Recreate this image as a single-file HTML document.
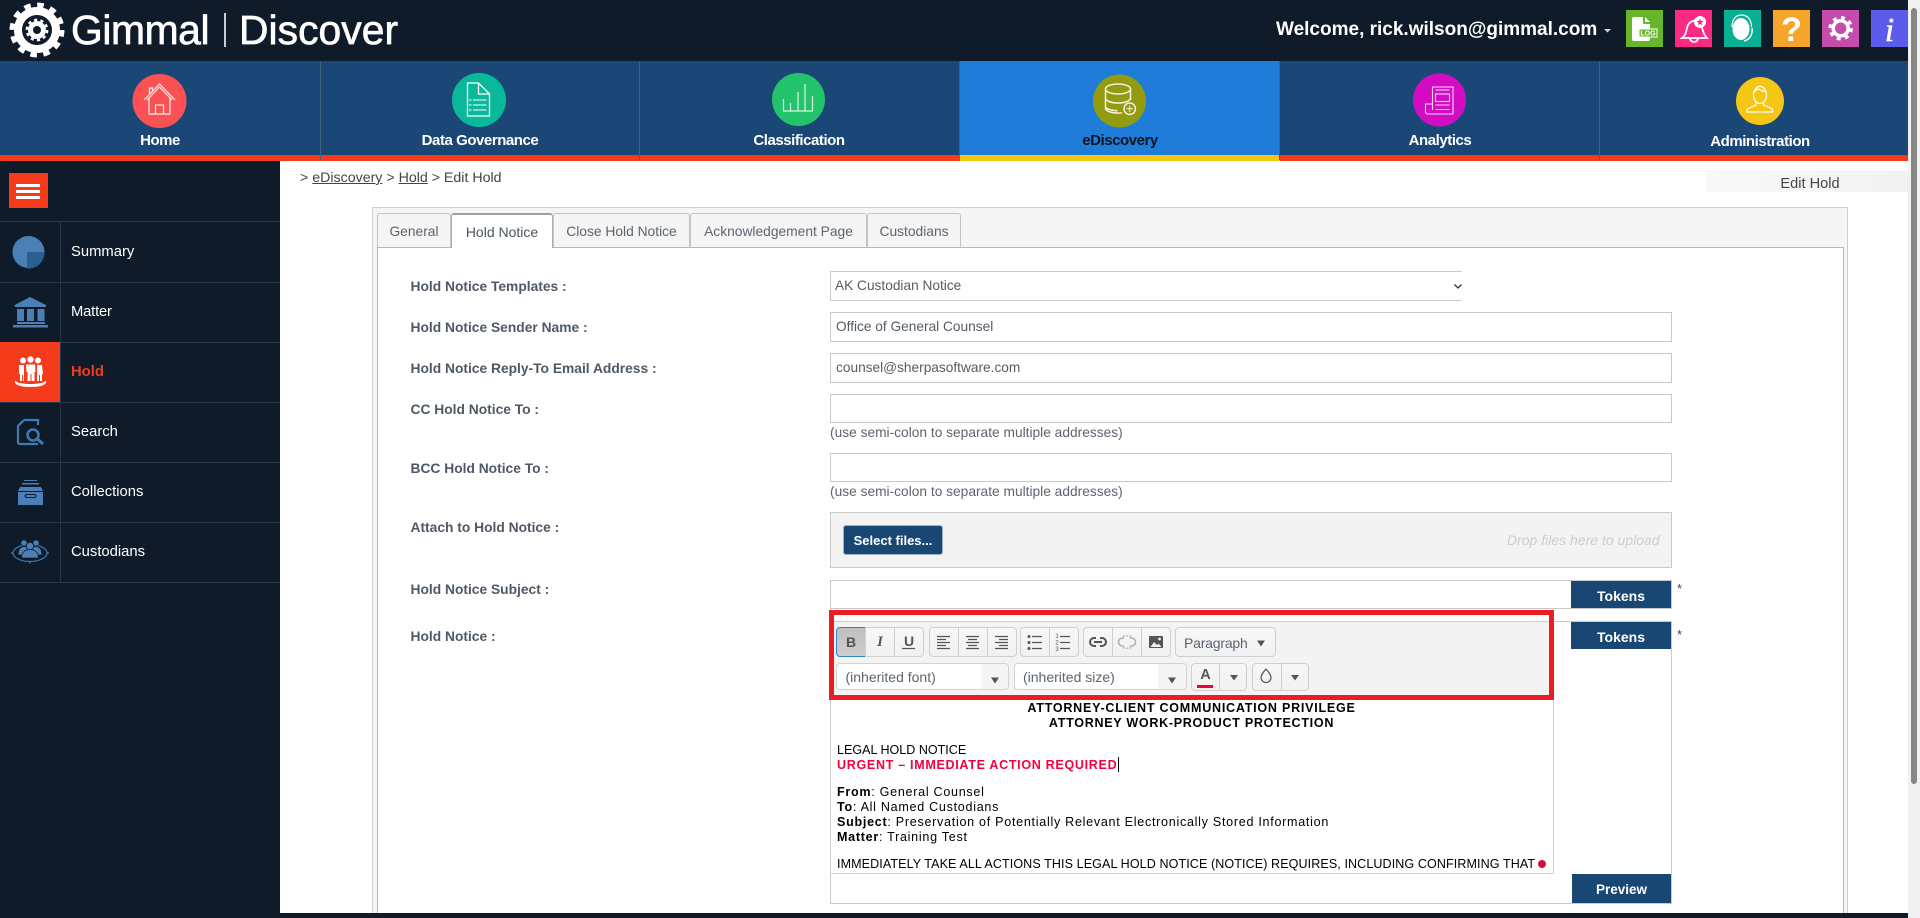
<!DOCTYPE html>
<html lang="en"><head><meta charset="utf-8"><title>Gimmal Discover - Edit Hold</title>
<style>
html,body{margin:0;padding:0;width:1920px;height:918px;overflow:hidden;background:#fff;font-family:"Liberation Sans",Arial,sans-serif}
.b{position:absolute;box-sizing:border-box}
.t{position:absolute;white-space:nowrap;line-height:20px;height:20px}
.nl{color:#fff;font-weight:700;font-size:15px;letter-spacing:-.45px;text-align:center;width:320px}
.sl{color:#fff;font-size:14.8px;left:71px}
.lb{left:410.5px;font-weight:700;font-size:13.8px;color:#4f5966}
.in{left:830px;width:842px;border:1px solid #c9c9c9;background:#fff}
.tv{font-size:13.7px;color:#555c66;left:836px}
.hint{left:830px;font-size:13.75px;color:#5b6470}
.tab{top:213px;height:34px;background:#f5f5f5;border:1px solid #c4c4c4;border-bottom:0;border-radius:3px 3px 0 0;color:#5b6470;font-size:13.8px;line-height:35px;text-align:center}
.btn{background:linear-gradient(#f7f7f7,#f1f1f1);border:1px solid #cfcfcf}
.blue{background:#194774;color:#fff;font-weight:700;font-size:14px;text-align:center}
.ed{left:837px;font-size:12.55px;color:#000;line-height:15px;height:15px}
.ed b{font-weight:700}
.m{letter-spacing:.72px}
</style></head><body>
<!-- top + nav -->
<div class="b" style="left:0;top:0;width:1920px;height:61px;background:#0f1b28"></div>
<div class="b" style="left:0;top:61px;width:1908px;height:94px;background:#1a4775"></div>
<div class="b" style="left:960px;top:61px;width:320px;height:94px;background:#1f7cd8"></div>
<div class="b" style="left:0;top:155px;width:1908px;height:6px;background:#f43b1c"></div>
<div class="b" style="left:960px;top:155px;width:320px;height:6px;background:#f6c613"></div>
<div class="b" style="left:320px;top:61px;width:1px;height:99px;background:#41607f"></div>
<div class="b" style="left:639px;top:61px;width:1px;height:99px;background:#41607f"></div>
<div class="b" style="left:959px;top:61px;width:1px;height:94px;background:#41607f"></div>
<div class="b" style="left:1279px;top:61px;width:1px;height:99px;background:#41607f"></div>
<div class="b" style="left:1599px;top:61px;width:1px;height:99px;background:#41607f"></div>
<!-- sidebar -->
<div class="b" style="left:0;top:161px;width:280px;height:757px;background:#0f1b28"></div>
<div class="b" style="left:0;top:221px;width:280px;height:1px;background:#24384d"></div>
<div class="b" style="left:0;top:282px;width:280px;height:1px;background:#24384d"></div>
<div class="b" style="left:0;top:342px;width:280px;height:1px;background:#24384d"></div>
<div class="b" style="left:0;top:402px;width:280px;height:1px;background:#24384d"></div>
<div class="b" style="left:0;top:462px;width:280px;height:1px;background:#24384d"></div>
<div class="b" style="left:0;top:522px;width:280px;height:1px;background:#24384d"></div>
<div class="b" style="left:0;top:582px;width:280px;height:1px;background:#24384d"></div>
<div class="b" style="left:60px;top:222px;width:1px;height:360px;background:#24384d"></div>
<div class="b" style="left:0;top:342px;width:60px;height:60px;background:#f43b1c"></div>
<div class="b" style="left:9px;top:173px;width:39px;height:35px;background:#f43b1c"></div>
<div class="b" style="left:16px;top:184px;width:24px;height:3px;background:#fff"></div>
<div class="b" style="left:16px;top:190px;width:24px;height:3px;background:#fff"></div>
<div class="b" style="left:16px;top:196px;width:24px;height:3px;background:#fff"></div>
<div class="t sl" style="top:242px">Summary</div>
<div class="t sl" style="top:302px;letter-spacing:-.2px">Matter</div>
<div class="t sl" style="top:362px;color:#f43b1c;font-weight:700">Hold</div>
<div class="t sl" style="top:422px">Search</div>
<div class="t sl" style="top:482px">Collections</div>
<div class="t sl" style="top:542px">Custodians</div>
<!-- scrollbar -->
<div class="b" style="left:1908px;top:0;width:12px;height:918px;background:#f1f1f1"></div>
<div class="b" style="left:1911px;top:8px;width:6px;height:776px;background:#878787;border-radius:3px"></div>
<!-- brand text -->
<div class="t" style="left:71px;top:6px;height:48px;line-height:48px;font-size:40.8px;color:#fff;letter-spacing:-.4px;-webkit-text-stroke:.7px #fff">Gimmal</div>
<div class="b" style="left:224px;top:13px;width:2px;height:34px;background:#c9ced3"></div>
<div class="t" style="left:239px;top:6px;height:48px;line-height:48px;font-size:40.8px;color:#fff;letter-spacing:.05px;-webkit-text-stroke:.7px #fff">Discover</div>
<div class="t" style="left:1276px;top:20px;font-size:19px;font-weight:700;color:#fff;letter-spacing:0">Welcome, rick.wilson@gimmal.com</div>
<div class="t nl" style="left:0;top:131px">Home</div>
<div class="t nl" style="left:320px;top:131px">Data Governance</div>
<div class="t nl" style="left:639px;top:131px">Classification</div>
<div class="t nl" style="left:960px;top:131px;color:#0b1622">eDiscovery</div>
<div class="t nl" style="left:1280px;top:131px">Analytics</div>
<div class="t nl" style="left:1600px;top:132px">Administration</div>
<!-- breadcrumb -->
<div class="t" style="left:300px;top:168px;font-size:14.2px;color:#444">&gt; <u>eDiscovery</u> &gt; <u>Hold</u> &gt; Edit Hold</div>
<div class="b" style="left:1706px;top:171px;width:202px;height:21px;background:linear-gradient(90deg,#f9f9f9,#f2f2f2)"></div>
<div class="t" style="left:1706px;width:208px;top:174px;font-size:14.6px;color:#444;text-align:center">Edit Hold</div>
<!-- panel -->
<div class="b" style="left:372px;top:207px;width:1476px;height:706px;background:#f5f5f5;border:1px solid #cfcfcf;border-bottom:0"></div>
<div class="b" style="left:377px;top:247px;width:1467px;height:666px;background:#fff;border:1px solid #b9b9b9;border-bottom:0"></div>
<div class="b tab" style="left:377px;width:74px">General</div>
<div class="b tab" style="left:451px;width:102px;height:35px;background:#fff;border-color:#b0b0b0;border-top:2px solid #9f9f9f;line-height:34px;color:#4c5560;font-size:14px">Hold Notice</div>
<div class="b tab" style="left:553px;width:137px">Close Hold Notice</div>
<div class="b tab" style="left:690px;width:177px">Acknowledgement Page</div>
<div class="b tab" style="left:867px;width:94px">Custodians</div>
<!-- footer strip -->
<div class="b" style="left:0;top:913px;width:1908px;height:5px;background:#0f1b28"></div>
<!-- labels -->
<div class="t lb" style="top:277px">Hold Notice Templates :</div>
<div class="t lb" style="top:318px">Hold Notice Sender Name :</div>
<div class="t lb" style="top:359px">Hold Notice Reply-To Email Address :</div>
<div class="t lb" style="top:400px">CC Hold Notice To :</div>
<div class="t lb" style="top:459px">BCC Hold Notice To :</div>
<div class="t lb" style="top:518px">Attach to Hold Notice :</div>
<div class="t lb" style="top:580px">Hold Notice Subject :</div>
<div class="t lb" style="top:627px">Hold Notice :</div>
<!-- inputs -->
<div class="b" style="left:830px;top:271px;width:632px;height:30px;border:1px solid #c9c9c9;border-right:0;background:#fff"></div>
<div class="t tv" style="left:835px;top:276px">AK Custodian Notice</div>
<div class="b in" style="top:312px;height:30px"></div>
<div class="t tv" style="top:317px">Office of General Counsel</div>
<div class="b in" style="top:353px;height:30px"></div>
<div class="t tv" style="top:358px">counsel@sherpasoftware.com</div>
<div class="b in" style="top:394px;height:29px"></div>
<div class="t hint" style="top:423px">(use semi-colon to separate multiple addresses)</div>
<div class="b in" style="top:453px;height:29px"></div>
<div class="t hint" style="top:482px">(use semi-colon to separate multiple addresses)</div>
<div class="b" style="left:830px;top:512px;width:842px;height:56px;background:#f3f3f3;border:1px solid #cbcbcb"></div>
<div class="b blue" style="left:843px;top:525px;width:100px;height:30px;border:1px solid #9fb0c2;border-radius:3px;line-height:30px;font-size:13px">Select files...</div>
<div class="t" style="left:1507px;width:152px;top:530px;text-align:right;font-style:italic;font-size:14px;color:#cdcdcd">Drop files here to upload</div>
<div class="b in" style="top:580px;height:29px"></div>
<div class="b blue" style="left:1571px;top:581px;width:100px;height:27px;line-height:30px">Tokens</div>
<div class="t" style="left:1677px;top:579px;font-size:13px;color:#445">*</div>
<!-- editor -->
<div class="b" style="left:830px;top:621px;width:842px;height:283px;border:1px solid #c9c9c9;background:#fff"></div>
<div class="b" style="left:830px;top:621px;width:724px;height:253px;border:1px solid #d0d0d0;background:#fff"></div>
<div class="b" style="left:831px;top:622px;width:722px;height:75px;background:#f3f3f3"></div>
<div class="b blue" style="left:1571px;top:622px;width:100px;height:27px;line-height:30px">Tokens</div>
<div class="t" style="left:1677px;top:625px;font-size:13px;color:#445">*</div>
<div class="b blue" style="left:1572px;top:874px;width:99px;height:29px;line-height:32px;font-size:13.5px">Preview</div>
<!-- toolbar -->
<div class="b" style="left:836px;top:627px;width:30px;height:30px;background:linear-gradient(#bfbfbf,#cdcdcd);border:1px solid #2e86c8;border-radius:4px 0 0 4px"></div>
<div class="b btn" style="left:865px;top:627px;width:30px;height:30px"></div>
<div class="b btn" style="left:894px;top:627px;width:30px;height:30px;border-radius:0 4px 4px 0"></div>
<div class="b btn" style="left:929px;top:627px;width:30px;height:30px;border-radius:4px 0 0 4px"></div>
<div class="b btn" style="left:958px;top:627px;width:30px;height:30px"></div>
<div class="b btn" style="left:987px;top:627px;width:30px;height:30px;border-radius:0 4px 4px 0"></div>
<div class="b btn" style="left:1020px;top:627px;width:30px;height:30px;border-radius:4px 0 0 4px"></div>
<div class="b btn" style="left:1049px;top:627px;width:30px;height:30px;border-radius:0 4px 4px 0"></div>
<div class="b btn" style="left:1083px;top:627px;width:30px;height:30px;border-radius:4px 0 0 4px"></div>
<div class="b btn" style="left:1112px;top:627px;width:30px;height:30px"></div>
<div class="b btn" style="left:1141px;top:627px;width:30px;height:30px;border-radius:0 4px 4px 0"></div>
<div class="b btn" style="left:1175px;top:627px;width:101px;height:30px;border-radius:4px"></div>
<div class="b" style="left:836px;top:663px;width:173px;height:27px;background:#fff;border:1px solid #d2d2d2;border-radius:4px"></div>
<div class="b" style="left:981px;top:664px;width:27px;height:25px;background:#f5f5f5;border-radius:0 3px 3px 0"></div>
<div class="b" style="left:1014px;top:663px;width:173px;height:27px;background:#fff;border:1px solid #d2d2d2;border-radius:4px"></div>
<div class="b" style="left:1158px;top:664px;width:28px;height:25px;background:#f5f5f5;border-radius:0 3px 3px 0"></div>
<div class="b btn" style="left:1191px;top:663px;width:29px;height:28px;border-radius:4px 0 0 4px"></div>
<div class="b btn" style="left:1219px;top:663px;width:28px;height:28px;border-radius:0 4px 4px 0"></div>
<div class="b btn" style="left:1252px;top:663px;width:30px;height:28px;border-radius:4px 0 0 4px"></div>
<div class="b btn" style="left:1281px;top:663px;width:28px;height:28px;border-radius:0 4px 4px 0"></div>
<div class="t" style="left:836px;width:30px;top:632px;text-align:center;font-weight:700;font-size:14px;color:#555">B</div>
<div class="t" style="left:865px;width:30px;top:632px;text-align:center;font-style:italic;font-family:'Liberation Serif',serif;font-weight:700;font-size:15px;color:#555">I</div>
<div class="t" style="left:894px;width:30px;top:631px;text-align:center;font-weight:700;font-size:14px;color:#555">U</div>
<div class="t" style="left:1184px;top:633px;font-size:14px;letter-spacing:-.2px;color:#5b6470">Paragraph</div>
<div class="t" style="left:845.5px;top:667px;font-size:14px;color:#5b6470">(inherited font)</div>
<div class="t" style="left:1023px;top:667px;font-size:14px;color:#5b6470">(inherited size)</div>
<div class="t" style="left:1191px;width:29px;top:665px;text-align:center;font-weight:700;font-size:14.5px;color:#555">A</div>
<!-- red box -->
<div class="b" style="left:829px;top:610px;width:725px;height:90px;border:5px solid #ed1c24"></div>
<!-- editor text -->
<div class="t ed" style="left:831px;width:721px;top:701px;text-align:center;letter-spacing:.75px"><b>ATTORNEY-CLIENT COMMUNICATION PRIVILEGE</b></div>
<div class="t ed" style="left:831px;width:721px;top:716px;text-align:center;letter-spacing:.7px"><b>ATTORNEY WORK-PRODUCT PROTECTION</b></div>
<div class="t ed" style="top:743px">LEGAL HOLD NOTICE</div>
<div class="t ed" style="top:758px;color:#f5003d;font-weight:700;letter-spacing:.68px">URGENT &#8211; IMMEDIATE ACTION REQUIRED</div>
<div class="b" style="left:1118px;top:757px;width:1px;height:15px;background:#000"></div>
<div class="t ed m" style="top:785px"><b>From</b>: General Counsel</div>
<div class="t ed m" style="top:800px"><b>To</b>: All Named Custodians</div>
<div class="t ed m" style="top:815px"><b>Subject</b>: Preservation of Potentially Relevant Electronically Stored Information</div>
<div class="t ed m" style="top:830px"><b>Matter</b>: Training Test</div>
<div class="t ed" style="top:857px;letter-spacing:.09px">IMMEDIATELY TAKE ALL ACTIONS THIS LEGAL HOLD NOTICE (NOTICE) REQUIRES, INCLUDING CONFIRMING THAT</div>
<!-- icon layer -->
<svg class="b" style="left:0;top:0" width="1920" height="918" viewBox="0 0 1920 918" xmlns="http://www.w3.org/2000/svg">
<!-- logo gear -->
<g transform="translate(37,30)" fill="none" stroke="#fff">
<circle r="25" stroke-width="5" stroke-dasharray="6.6 6.49"/>
<circle r="19" stroke-width="8"/>
<circle r="6.5" stroke-width="5"/>
<circle r="10.2" stroke-width="2.4" stroke-dasharray="3.2 3.2"/>
</g>
<!-- welcome caret -->
<path d="M1604 29h7l-3.5 3.5z" fill="#cfd3d8"/>
<!-- top-right squares -->
<rect x="1626" y="10" width="37" height="37" fill="#67b52d"/>
<rect x="1675" y="10" width="37" height="37" fill="#fc2a82"/>
<rect x="1724" y="10" width="37" height="37" fill="#0ab093"/>
<rect x="1773" y="10" width="37" height="37" fill="#f5a62a"/>
<rect x="1822" y="10" width="37" height="37" fill="#c44caa"/>
<rect x="1871" y="10" width="37" height="37" fill="#5c5cec"/>
<!-- log -->
<path d="M1632 19q0-2 2-2h9v6q0 1 1 1h6v15q0 2-2 2h-14q-2 0-2-2z" fill="#fff"/>
<path d="M1645 17l5 5h-5z" fill="#fff"/>
<rect x="1639" y="29" width="18" height="8" fill="#67b52d" stroke="#fff" stroke-width="1"/>
<text x="1648" y="35.500" font-size="7" font-weight="700" fill="#fff" text-anchor="middle" font-family="Liberation Sans,sans-serif">LOG</text>
<!-- bell -->
<path d="M1682 38c4-3 4-6 5-10 1-5 5-8 9-7 4 2 6 5 7 10 1 3 2 5 4 7z" fill="none" stroke="#fff" stroke-width="1.800"/>
<path d="M1690 38a4 4 0 0 0 8 0" fill="none" stroke="#fff" stroke-width="1.800"/>
<circle cx="1700" cy="22" r="6" fill="#fff"/>
<path d="M1700 18.500l1 2.400 2.500.2-1.900 1.600.6 2.500-2.200-1.300-2.200 1.300.6-2.500-1.900-1.600 2.500-.2z" fill="#fc2a82"/>
<!-- headset -->
<ellipse cx="1741" cy="29" rx="8.500" ry="11" fill="#fff"/>
<path d="M1732 27c0-8 4-12 9.500-12s10 4 10 12" fill="none" stroke="#fff" stroke-width="1.200"/>
<path d="M1752 28c1 7-3 12-8 13" fill="none" stroke="#fff" stroke-width="1.500"/>
<!-- question -->
<text x="1791.500" y="41" font-size="34" font-weight="700" fill="#fff" text-anchor="middle" font-family="Liberation Sans,sans-serif">?</text>
<!-- settings gear -->
<g transform="translate(1840.700,28.300)" fill="none" stroke="#fff">
<circle r="7.500" stroke-width="3.500"/>
<circle r="10.500" stroke-width="3.500" stroke-dasharray="3.800 4.450"/>
</g>
<!-- info -->
<text x="1889.500" y="41" font-size="34" font-style="italic" fill="#fff" stroke="#fff" stroke-width=".5" text-anchor="middle" font-family="Liberation Serif,serif">i</text>
<!-- nav circles -->
<circle cx="159.500" cy="101" r="27" fill="#fa5254"/>
<circle cx="479" cy="100" r="27" fill="#0ab89a"/>
<circle cx="798.500" cy="99.500" r="26.500" fill="#23c36c"/>
<circle cx="1119.500" cy="101" r="26.500" fill="#939b10"/>
<circle cx="1439.500" cy="100" r="26.500" fill="#d30cc4"/>
<circle cx="1760" cy="101" r="24" fill="#f5c613"/>
<!-- home icon -->
<g fill="none" stroke="#fff" stroke-width="1.200" opacity=".9">
<path d="M144 100l15.500-16 15.500 16M147 100l12.500-13 12.500 13"/>
<path d="M149 97v17h21v-17M155.500 114v-9h8v9"/>
<path d="M149.500 94v-6h3v3"/>
</g>
<!-- doc icon -->
<g fill="none" stroke="#fff" stroke-width="1.300">
<path d="M467.500 83h11l11 11v22h-22zM478.500 83v11h11"/>
<path d="M469 100h2.500M473 100h13.500M469 105h2.500M473 105h13.500M469 110h2.500M473 110h13.500" stroke-width="1.100"/>
</g>
<!-- bars -->
<g fill="none" stroke="#d6f5e2" stroke-width="1.200">
<path d="M783 111h30M783.500 99v12M790.500 103v8M798 92v19M805 84v27M812.500 96v15"/>
</g>
<!-- db -->
<g fill="none" stroke="#f2f2e0" stroke-width="1.500">
<ellipse cx="1118" cy="89" rx="12.500" ry="5"/>
<path d="M1105.500 89v19c0 3 6 5 12.500 5 1.500 0 3 0 4-.2M1130.500 89v11"/>
<path d="M1105.500 98c0 3 6 5 12.500 5s12.500-2 12.500-5M1105.500 107c1 2 6 3.500 12 3.800"/>
<circle cx="1129.700" cy="108.700" r="5.700"/>
<path d="M1129.700 105.500v6.400M1126.500 108.700h6.400" stroke-width="1.100"/>
</g>
<!-- analytics -->
<g fill="none" stroke="#f5d4f2" stroke-width="1.100">
<path d="M1432.500 110V87h20.500v27h-25c-1.500 0-2.500-1-2.500-2.500V104h7"/>
<rect x="1435.500" y="94" width="14" height="7.500"/>
<path d="M1435.500 90h14M1435.500 105h14M1435.500 109.500h14"/>
</g>
<!-- admin -->
<g fill="none" stroke="#fff" stroke-width="1.200">
<ellipse cx="1760" cy="95" rx="6.500" ry="8.500"/>
<path d="M1753.500 92c3-2 4-3 5-3s2 2 8 3"/>
<path d="M1756 102v3l-9 4v3h25.500v-3l-9-4v-3"/>
</g>
<!-- sidebar icons -->
<circle cx="28.500" cy="252" r="16" fill="#4a80b6"/>
<path d="M27 252v16.500a16 16 0 0 0 17.500-16.500z" fill="#2a5f94"/>
<g fill="#4a80b6">
<path d="M30 297l16 8v2H14.700v-2z"/>
<rect x="17" y="309" width="7" height="12"/><rect x="27" y="309" width="7" height="12"/><rect x="37.500" y="309" width="7" height="12"/>
<rect x="17" y="322" width="28" height="2"/><rect x="13" y="325" width="35" height="2.500"/>
</g>
<g fill="#fff">
<circle cx="23" cy="360.500" r="3"/><circle cx="30.500" cy="359.500" r="3.200"/><circle cx="38" cy="360.500" r="3"/>
<path d="M19 365h5v16h-1v-6h-1v6h-2v-7h-1zM26 364.500h9l.5 7.500h-1v9h-3v-7h-1v7h-3v-9h-1zM37 365h5l1 9h-1v7h-2v-6h-1v6h-2z"/>
<path d="M15 380.500c1 2 7 3.500 15.500 3.500S45 382.500 46 380.500v2c-1 3-7 4.500-15.500 4.500S16 385.500 15 382.500z"/>
</g>
<g fill="none" stroke="#3f7ab3" stroke-width="2.200">
<path d="M24 420h14v5M24 420l-6 6v16q0 2 2 2h18"/>
<circle cx="33" cy="435" r="5.500" stroke-width="2.500"/>
<path d="M37.500 439l5.500 5" stroke-width="3"/>
</g>
<g fill="#4a80b6">
<path d="M24 480h13v1H24zM22 483h17v1.500H22z"/>
<path d="M20 487h21l2 4H18z"/><rect x="18" y="492" width="25" height="13"/>
</g>
<rect x="25" y="494.500" width="11" height="3" rx="1.500" fill="none" stroke="#0f1b28" stroke-width="1"/>
<ellipse cx="30" cy="553" rx="17" ry="8.500" fill="none" stroke="#3f7ab3" stroke-width="1.200"/>
<g fill="#4a80b6" stroke="#0f1b28" stroke-width=".8">
<circle cx="24" cy="543" r="3.200"/><circle cx="36" cy="543" r="3.200"/>
<path d="M18 555c0-6 3-8.500 6-8.500s6 2.500 6 8.500zM30 555c0-6 3-8.500 6-8.500s6 2.500 6 8.500z"/>
<circle cx="30" cy="546" r="3.800"/>
<path d="M21.500 558c0-6 4-8.500 8.500-8.500s8.500 2.500 8.500 8.500z"/>
</g>
<path d="M13 553h-2M49 553h-2M30 561.500v2" stroke="#3f7ab3" stroke-width="1.200"/>
<!-- toolbar icons -->
<g stroke="#555" stroke-width="1.200" fill="none">
<path d="M902 648.500h13"/>
<path d="M937 636.500h13M937 639.500h9M937 642.500h13M937 645.500h9M937 648.500h13"/>
<path d="M966 636.500h13M968 639.500h9M966 642.500h13M968 645.500h9M966 648.500h13"/>
<path d="M995 636.500h13M999 639.500h9M995 642.500h13M999 645.500h9M995 648.500h13"/>
<path d="M1032 636.500h10M1032 642.500h10M1032 648.500h10"/>
<path d="M1060 636.500h10M1060 642.500h10M1060 648.500h10"/>
</g>
<g fill="#555"><circle cx="1029" cy="636.500" r="1.500"/><circle cx="1029" cy="642.500" r="1.500"/><circle cx="1029" cy="648.500" r="1.500"/></g>
<g font-size="6" fill="#555" font-family="Liberation Sans,sans-serif" text-anchor="middle"><text x="1057" y="638">1</text><text x="1057" y="644.500">2</text><text x="1057" y="651">3</text></g>
<path d="M1096 638h-2a4 4 0 0 0 0 8h2M1100 638h2a4 4 0 0 1 0 8h-2M1094 642h8" fill="none" stroke="#555" stroke-width="2"/>
<path d="M1124 638h-1.500a4 4 0 0 0 0 8h1.500M1130 638h1.500a4 4 0 0 1 0 8h-1.500M1127 635v1.500M1127 647.500v1.500M1123.500 635.500l.8 1.300M1130.500 635.500l-.8 1.300M1123.500 648.500l.8-1.300M1130.500 648.500l-.8-1.300" fill="none" stroke="#b0b0b0" stroke-width="1.600"/>
<rect x="1149" y="636" width="14" height="12" rx="1" fill="#555"/>
<circle cx="1159.500" cy="639" r="1.400" fill="#f3f3f3"/>
<path d="M1150.500 647l3.500-5 3 3 1.500-1.500 3 3.500z" fill="#f3f3f3"/>
<g fill="#555">
<path d="M1257 640.500h8l-4 6z"/>
<path d="M991 677.500h8l-4 6z"/>
<path d="M1168 677.500h8l-4 6z"/>
<path d="M1230 675h8l-4 5.500z"/>
<path d="M1291 675h8l-4 5.500z"/>
</g>
<rect x="1197" y="685" width="16" height="3" fill="#f0003c"/>
<path d="M1266 669c3 3.500 5 6 5 8.500a5 5 0 0 1-10 0c0-2.500 2-5 5-8.500z" fill="none" stroke="#555" stroke-width="1.200"/>
<!-- select arrow -->
<path d="M1454.500 284.500l3.500 3.500 3.500-3.500" fill="none" stroke="#333" stroke-width="1.300"/>
<!-- red spell dot -->
<circle cx="1542" cy="864" r="4" fill="#d0103a"/>
</svg>
</body></html>
